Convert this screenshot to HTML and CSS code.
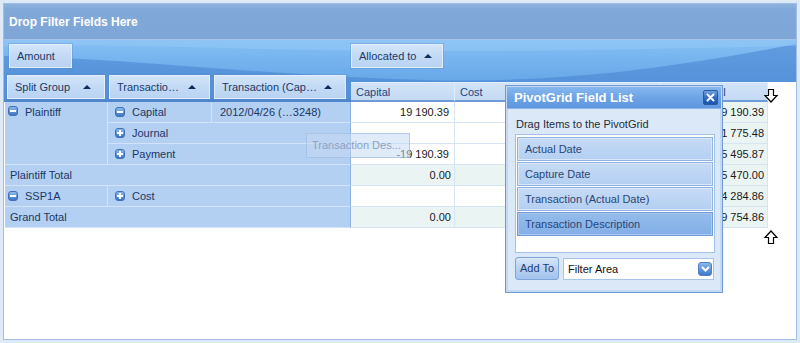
FILE: index.html
```html
<!DOCTYPE html>
<html>
<head>
<meta charset="utf-8">
<link rel="stylesheet" href="styles.css">
</head>
<body>
<div class="pivot">
  <div class="filter-area">Drop Filter Fields Here</div>
  <div class="header-band">
    <svg class="wave" viewBox="0 0 792 62" preserveAspectRatio="none">
      <path d="M0,16 C120,18 240,34 420,40 C560,44 680,26 792,4 L792,62 L0,62 Z" fill="#4a86d0" opacity="0.6"/>
      <path d="M0,0 L792,0 L792,6 C600,10 420,14 220,8 C140,6 60,4 0,6 Z" fill="#9fd0f8" opacity="0.35"/>
    </svg>
    <div class="left-head">
      <div class="data-fields"><div class="field f-amount">Amount</div></div>
      <div class="row-fields">
        <div class="field f-split">Split Group<i class="sort"></i></div>
        <div class="field f-tr">Transactio…<i class="sort"></i></div>
        <div class="field f-trc">Transaction (Cap…<i class="sort"></i></div>
      </div>
    </div>
    <div class="right-head">
      <div class="col-fields"><div class="field f-alloc">Allocated to<i class="sort"></i></div></div>
      <div class="col-headers">
        <div class="ch c1">Capital</div>
        <div class="ch c2">Cost</div>
        <div class="ch c3"></div>
        <div class="ch c4">Grand Total</div>
        <div class="ch-empty"></div>
      </div>
    </div>
  </div>
  <div class="body-grid">
    <div class="rh r-plaintiff"><span class="exp minus"></span>Plaintiff</div>
    <div class="rh col2"><span class="exp minus"></span>Capital</div>
    <div class="rh col3">2012/04/26 (…3248)</div>
    <div class="dc">19 190.39</div><div class="dc"></div><div class="dc"></div><div class="dc tot">19 190.39</div><div class="blank"></div>

    <div class="rh col2 span2"><span class="exp plus"></span>Journal</div>
    <div class="dc"></div><div class="dc"></div><div class="dc"></div><div class="dc tot">11 775.48</div><div class="blank"></div>

    <div class="rh col2 span2"><span class="exp plus"></span>Payment</div>
    <div class="dc">-19 190.39</div><div class="dc"></div><div class="dc"></div><div class="dc tot">-5 495.87</div><div class="blank"></div>

    <div class="rh total span3">Plaintiff Total</div>
    <div class="dc tot">0.00</div><div class="dc tot"></div><div class="dc tot"></div><div class="dc tot">25 470.00</div><div class="blank"></div>

    <div class="rh col1"><span class="exp minus"></span>SSP1A</div>
    <div class="rh col2 span2"><span class="exp plus"></span>Cost</div>
    <div class="dc"></div><div class="dc"></div><div class="dc"></div><div class="dc tot">4 284.86</div><div class="blank"></div>

    <div class="rh total span3">Grand Total</div>
    <div class="dc tot">0.00</div><div class="dc tot"></div><div class="dc tot"></div><div class="dc tot">29 754.86</div><div class="blank"></div>
  </div>

  <div class="ghost">Transaction Des...</div>

  <div class="fieldlist">
    <div class="fl-title">PivotGrid Field List<span class="fl-close"><svg width="9" height="9" viewBox="0 0 9 9"><path d="M1.5 1.5 L7.5 7.5 M7.5 1.5 L1.5 7.5" stroke="#fff" stroke-width="2" stroke-linecap="round"/></svg></span></div>
    <div class="fl-body">
      <div class="fl-hint">Drag Items to the PivotGrid</div>
      <div class="fl-list">
        <div class="fl-item">Actual Date</div>
        <div class="fl-item">Capture Date</div>
        <div class="fl-item">Transaction (Actual Date)</div>
        <div class="fl-item sel">Transaction Description</div>
      </div>
      <div class="fl-bottom">
        <div class="btn-add">Add To</div>
        <div class="combo">Filter Area<span class="combo-btn"><svg width="9" height="6" viewBox="0 0 9 6"><path d="M1 1 L4.5 4.5 L8 1" stroke="#fff" stroke-width="2" fill="none"/></svg></span></div>
      </div>
    </div>
  </div>

  <svg class="cursor cur-down" width="16" height="16" viewBox="0 0 16 16"><path d="M5.5 1.5 H10.5 V7.5 H14 L8 14 L2 7.5 H5.5 Z" fill="#fff" stroke="#000" stroke-width="1.2" stroke-linejoin="miter"/></svg>
  <svg class="cursor cur-up" width="16" height="16" viewBox="0 0 16 16"><path d="M5.5 14.5 H10.5 V8.5 H14 L8 2 L2 8.5 H5.5 Z" fill="#fff" stroke="#000" stroke-width="1.2" stroke-linejoin="miter"/></svg>
</div>
</body>
</html>
```
FILE: styles.css
```css
* { box-sizing: border-box; }
html, body { margin: 0; padding: 0; }
body {
  width: 800px;
  height: 343px;
  background: #dfeaf8;
  font-family: "Liberation Sans", Arial, sans-serif;
  font-size: 11px;
  overflow: hidden;
}
.pivot {
  position: relative;
  margin: 3px;
  width: 794px;
  height: 337px;
  border: 1px solid #9fbde6;
  background: #fff;
}
.filter-area {
  height: 36px;
  background: linear-gradient(#8fb4df, #80a9d9 15%, #7ea7d7);
  border-bottom: 1px solid #a4c3ea;
  color: #fff;
  font-weight: bold;
  font-size: 12px;
  padding-left: 5px;
  line-height: 36px;
}
.header-band {
  position: relative;
  display: flex;
  height: 62px;
  background: linear-gradient(#86bff3 0%, #72b1ee 40%, #5c9be0 100%);
}
.wave {
  position: absolute;
  left: 0; top: 0;
  width: 100%; height: 100%;
}
.left-head, .right-head { position: relative; }
.left-head { width: 347px; }
.right-head { flex: 1; }
.data-fields { height: 33px; padding: 4px 0 0 5px; }
.row-fields {
  display: flex;
  gap: 4px;
  padding: 2px 0 0 3px;
  height: 29px;
  border-bottom: 3px solid #4f86cc;
}
.col-fields { height: 42px; padding: 4px 0 0 0; }
.field {
  display: flex;
  align-items: center;
  height: 24px;
  padding-left: 7px;
  color: #1c3a68;
  background: linear-gradient(#d3e5f9, #c3daf5 50%, #b9d3f2);
  border: 1px solid #e4eefb;
  box-shadow: 0 0 0 1px rgba(90,140,200,0.35);
  position: relative;
}
.f-amount { width: 63px; }
.f-alloc { width: 92px; }
.f-split { width: 98px; }
.f-tr { width: 101px; }
.f-trc { width: 132px; }
.sort {
  position: absolute;
  right: 13px;
  top: 9px;
  width: 0; height: 0;
  border-left: 4px solid transparent;
  border-right: 4px solid transparent;
  border-bottom: 4px solid #0f2a5c;
}
.f-alloc .sort { right: 10px; }
.col-headers {
  display: flex;
  height: 20px;
}
.ch {
  height: 20px;
  line-height: 18px;
  padding-left: 5px;
  color: #1e4680;
  background: linear-gradient(#d2e4f8, #c4daf4);
  border-right: 1px solid #e0ecfa;
  border-top: 1px solid #e3eefb;
  border-bottom: 2px solid #6f9cd6;
  white-space: nowrap;
  overflow: hidden;
}
.c1 { width: 104px; }
.c2 { width: 103px; }
.c3 { width: 103px; }
.c4 { width: 107px; padding-left: 8px; }
.ch-empty { flex: 1; background: #fff; margin-top: 0; }
.body-grid {
  display: grid;
  grid-template-columns: 103px 104px 139px 104px 103px 103px 107px 1fr;
  grid-template-rows: repeat(6, 21px);
  padding-left: 1px;
}
.rh {
  display: flex;
  align-items: center;
  color: #1c3866;
  background: #b3cff1;
  border-right: 1px solid #d2e3f7;
  border-bottom: 1px solid #d2e3f7;
  white-space: nowrap;
}
.r-plaintiff { grid-row: span 3; align-items: flex-start; padding-top: 4px; padding-left: 3px; }
.col1 { padding-left: 3px; }
.col2 { padding-left: 7px; }
.col3 { padding-left: 8px; border-right: 1px solid #8eb1e0; }
.span2 { grid-column: span 2; border-right: 1px solid #8eb1e0; }
.span3 { grid-column: span 3; border-right: 1px solid #8eb1e0; }
.total { padding-left: 5px; }
.exp {
  display: inline-block;
  width: 10px;
  height: 10px;
  margin-right: 7px;
  border-radius: 3px;
  background: linear-gradient(#8db9ec, #3d74c4);
  border: 1px solid #3f6fb5;
  position: relative;
  flex: none;
}
.exp::before {
  content: "";
  position: absolute;
  left: 1px; top: 3px;
  width: 6px; height: 2px;
  background: #fff;
}
.plus::after {
  content: "";
  position: absolute;
  left: 3px; top: 1px;
  width: 2px; height: 6px;
  background: #fff;
}
.dc {
  display: flex;
  align-items: center;
  justify-content: flex-end;
  padding-right: 5px;
  color: #1a1a1a;
  border-right: 1px solid #d6e4f4;
  border-bottom: 1px solid #d6e4f4;
  background: #fff;
}
.dc.tot { background: #eaf4f3; padding-right: 3px; }
.blank { background: #fff; }
.ghost {
  position: absolute;
  left: 302px;
  top: 129px;
  width: 104px;
  height: 25px;
  line-height: 23px;
  padding-left: 5px;
  color: #8ca2c6;
  background: rgba(196, 218, 244, 0.55);
  border: 1px solid rgba(160, 188, 225, 0.7);
}
.fieldlist {
  position: absolute;
  left: 501px;
  top: 81px;
  width: 218px;
  height: 208px;
  background: #dbe8f8;
  border: 1px solid #6f9ad4;
  box-shadow: inset 0 0 0 2px #c2d8f3;
}
.fl-title {
  position: relative;
  height: 22px;
  margin: 1px;
  padding-left: 7px;
  line-height: 21px;
  font-size: 13px;
  font-weight: bold;
  color: #fff;
  background: linear-gradient(#86b7ee, #6ea4e6 50%, #5f97de);
  border-bottom: 1px solid #8eb5e6;
}
.fl-close {
  position: absolute;
  right: 3px;
  top: 3px;
  width: 15px;
  height: 15px;
  display: flex;
  align-items: center;
  justify-content: center;
  border-radius: 2px;
  background: linear-gradient(#6f9fe0, #2f68c0 55%, #1d54aa);
  border: 1px solid #2a5aa0;
}
.fl-body { padding: 5px 7px 0 9px; }
.fl-hint { height: 19px; line-height: 18px; color: #1e2c40; padding-left: 1px; }
.fl-list {
  height: 119px;
  background: #fff;
  border: 1px solid #a2c1e8;
  padding: 2px 1px 0 1px;
  display: flex;
  flex-direction: column;
  gap: 1px;
}
.fl-item {
  height: 24px;
  line-height: 22px;
  padding-left: 7px;
  color: #2a4678;
  background: linear-gradient(#c6dbf5, #b3cff1);
  border: 1px solid #8fb3e2;
  box-shadow: inset 0 0 0 1px #d9e7f9;
}
.fl-item.sel {
  background: linear-gradient(#94bcec, #82afe7);
  border-color: #6f9ad6;
  box-shadow: inset 0 0 0 1px #a9c9f1;
}
.fl-bottom { display: flex; gap: 4px; margin-top: 4px; }
.btn-add {
  width: 44px;
  height: 23px;
  line-height: 21px;
  text-align: center;
  color: #1d3f7a;
  border-radius: 3px;
  background: linear-gradient(#d9e8fa, #b7d1f1 50%, #a4c3ec);
  border: 1px solid #7fa6da;
}
.combo {
  position: relative;
  width: 151px;
  height: 22px;
  margin-top: 1px;
  line-height: 20px;
  padding-left: 4px;
  color: #111;
  background: #fff;
  border: 1px solid #a8c4ea;
}
.combo-btn {
  position: absolute;
  right: 1px;
  top: 3px;
  width: 14px;
  height: 14px;
  display: flex;
  align-items: center;
  justify-content: center;
  border-radius: 3px;
  background: linear-gradient(#8ab6ec, #3f78cc);
  border: 1px solid #4f7fc4;
}
.cursor { position: absolute; }
.cur-down { left: 759px; top: 84px; }
.cur-up { left: 759px; top: 225px; }
```
